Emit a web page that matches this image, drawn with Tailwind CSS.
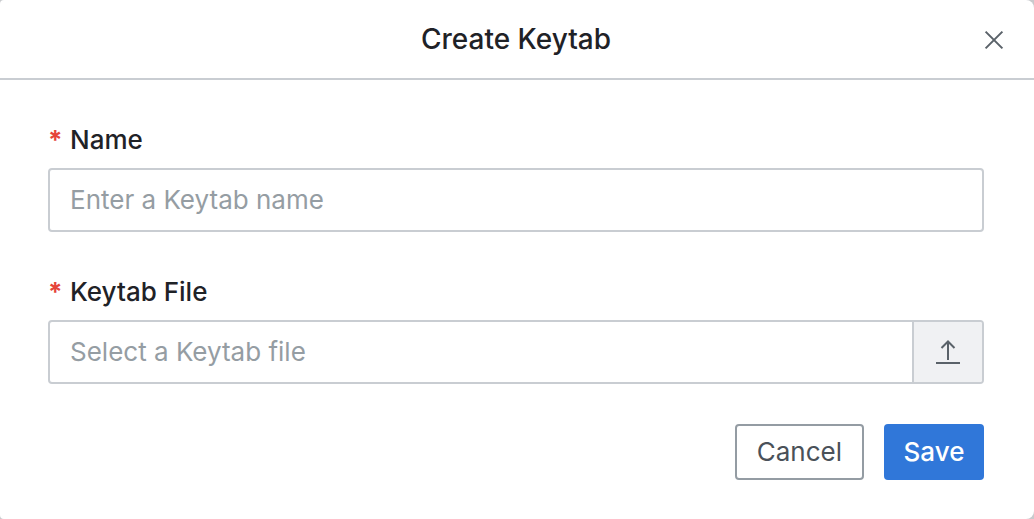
<!DOCTYPE html>
<html lang="en"><head><meta charset="utf-8"><title>Create Keytab</title>
<script src="https://cdn.jsdelivr.net/npm/@tailwindcss/browser@4"></script></head>
<body class="bg-[#c8cacd] font-['Inter',sans-serif] text-[#1f2227]">
<section role="dialog" aria-labelledby="title" class="min-h-screen rounded-l-sm rounded-r-lg bg-white">
<header class="relative flex h-20 items-center justify-center border-b-2 border-[#c9cdd2]">
<h1 id="title" class="pr-0.5 text-[28px] leading-8 font-medium">Create Keytab</h1>
<button type="button" aria-label="Close" class="absolute top-7 right-7 flex size-6 items-center justify-center text-[#5a6269]"><svg class="size-6" viewBox="0 0 24 24" fill="none" stroke="currentColor" stroke-width="2"><path d="M3.6 3.6 20.4 20.4M20.4 3.6 3.6 20.4"/></svg></button>
</header>
<form class="pt-11 pr-[50px] pl-12">
<label for="name" class="flex gap-2 text-[26px] leading-8 font-medium"><span class="w-[14px] font-bold text-[#e5443a]">*</span>Name</label>
<input id="name" type="text" placeholder="Enter a Keytab name" class="mt-3 block h-16 w-full rounded-sm border-2 border-[#c9cdd2] px-5 pb-0.5 text-[26px] outline-none placeholder:text-[#959da3]">
<label for="file" class="mt-11 flex gap-2 text-[26px] leading-8 font-medium"><span class="w-[14px] font-bold text-[#e5443a]">*</span>Keytab File</label>
<div class="mt-3 flex h-16 overflow-hidden rounded-sm border-2 border-[#c9cdd2]">
<input id="file" type="text" placeholder="Select a Keytab file" class="min-w-0 flex-1 px-5 pb-0.5 text-[26px] outline-none placeholder:text-[#959da3]">
<button type="button" aria-label="Upload file" class="flex w-[70px] items-center justify-center border-l-2 border-[#c9cdd2] bg-[#f0f1f3] text-[#5a6269]"><svg class="size-8" viewBox="0 0 32 32" fill="none" stroke="currentColor" stroke-width="2"><path d="M4 27H28M16 24V6M9.5 12l6.5-6.5 6.5 6.5"/></svg></button>
</div>
<div class="mt-10 flex justify-end gap-5">
<button type="button" class="h-14 rounded-sm border-2 border-[#949ca3] px-5 pb-0.5 text-[26px] text-[#4a5159]">Cancel</button>
<button type="submit" class="flex h-14 w-25 items-center justify-center rounded-sm bg-[#3077d9] pb-0.5 text-[26px] font-medium text-white">Save</button>
</div></form></section></body></html>
